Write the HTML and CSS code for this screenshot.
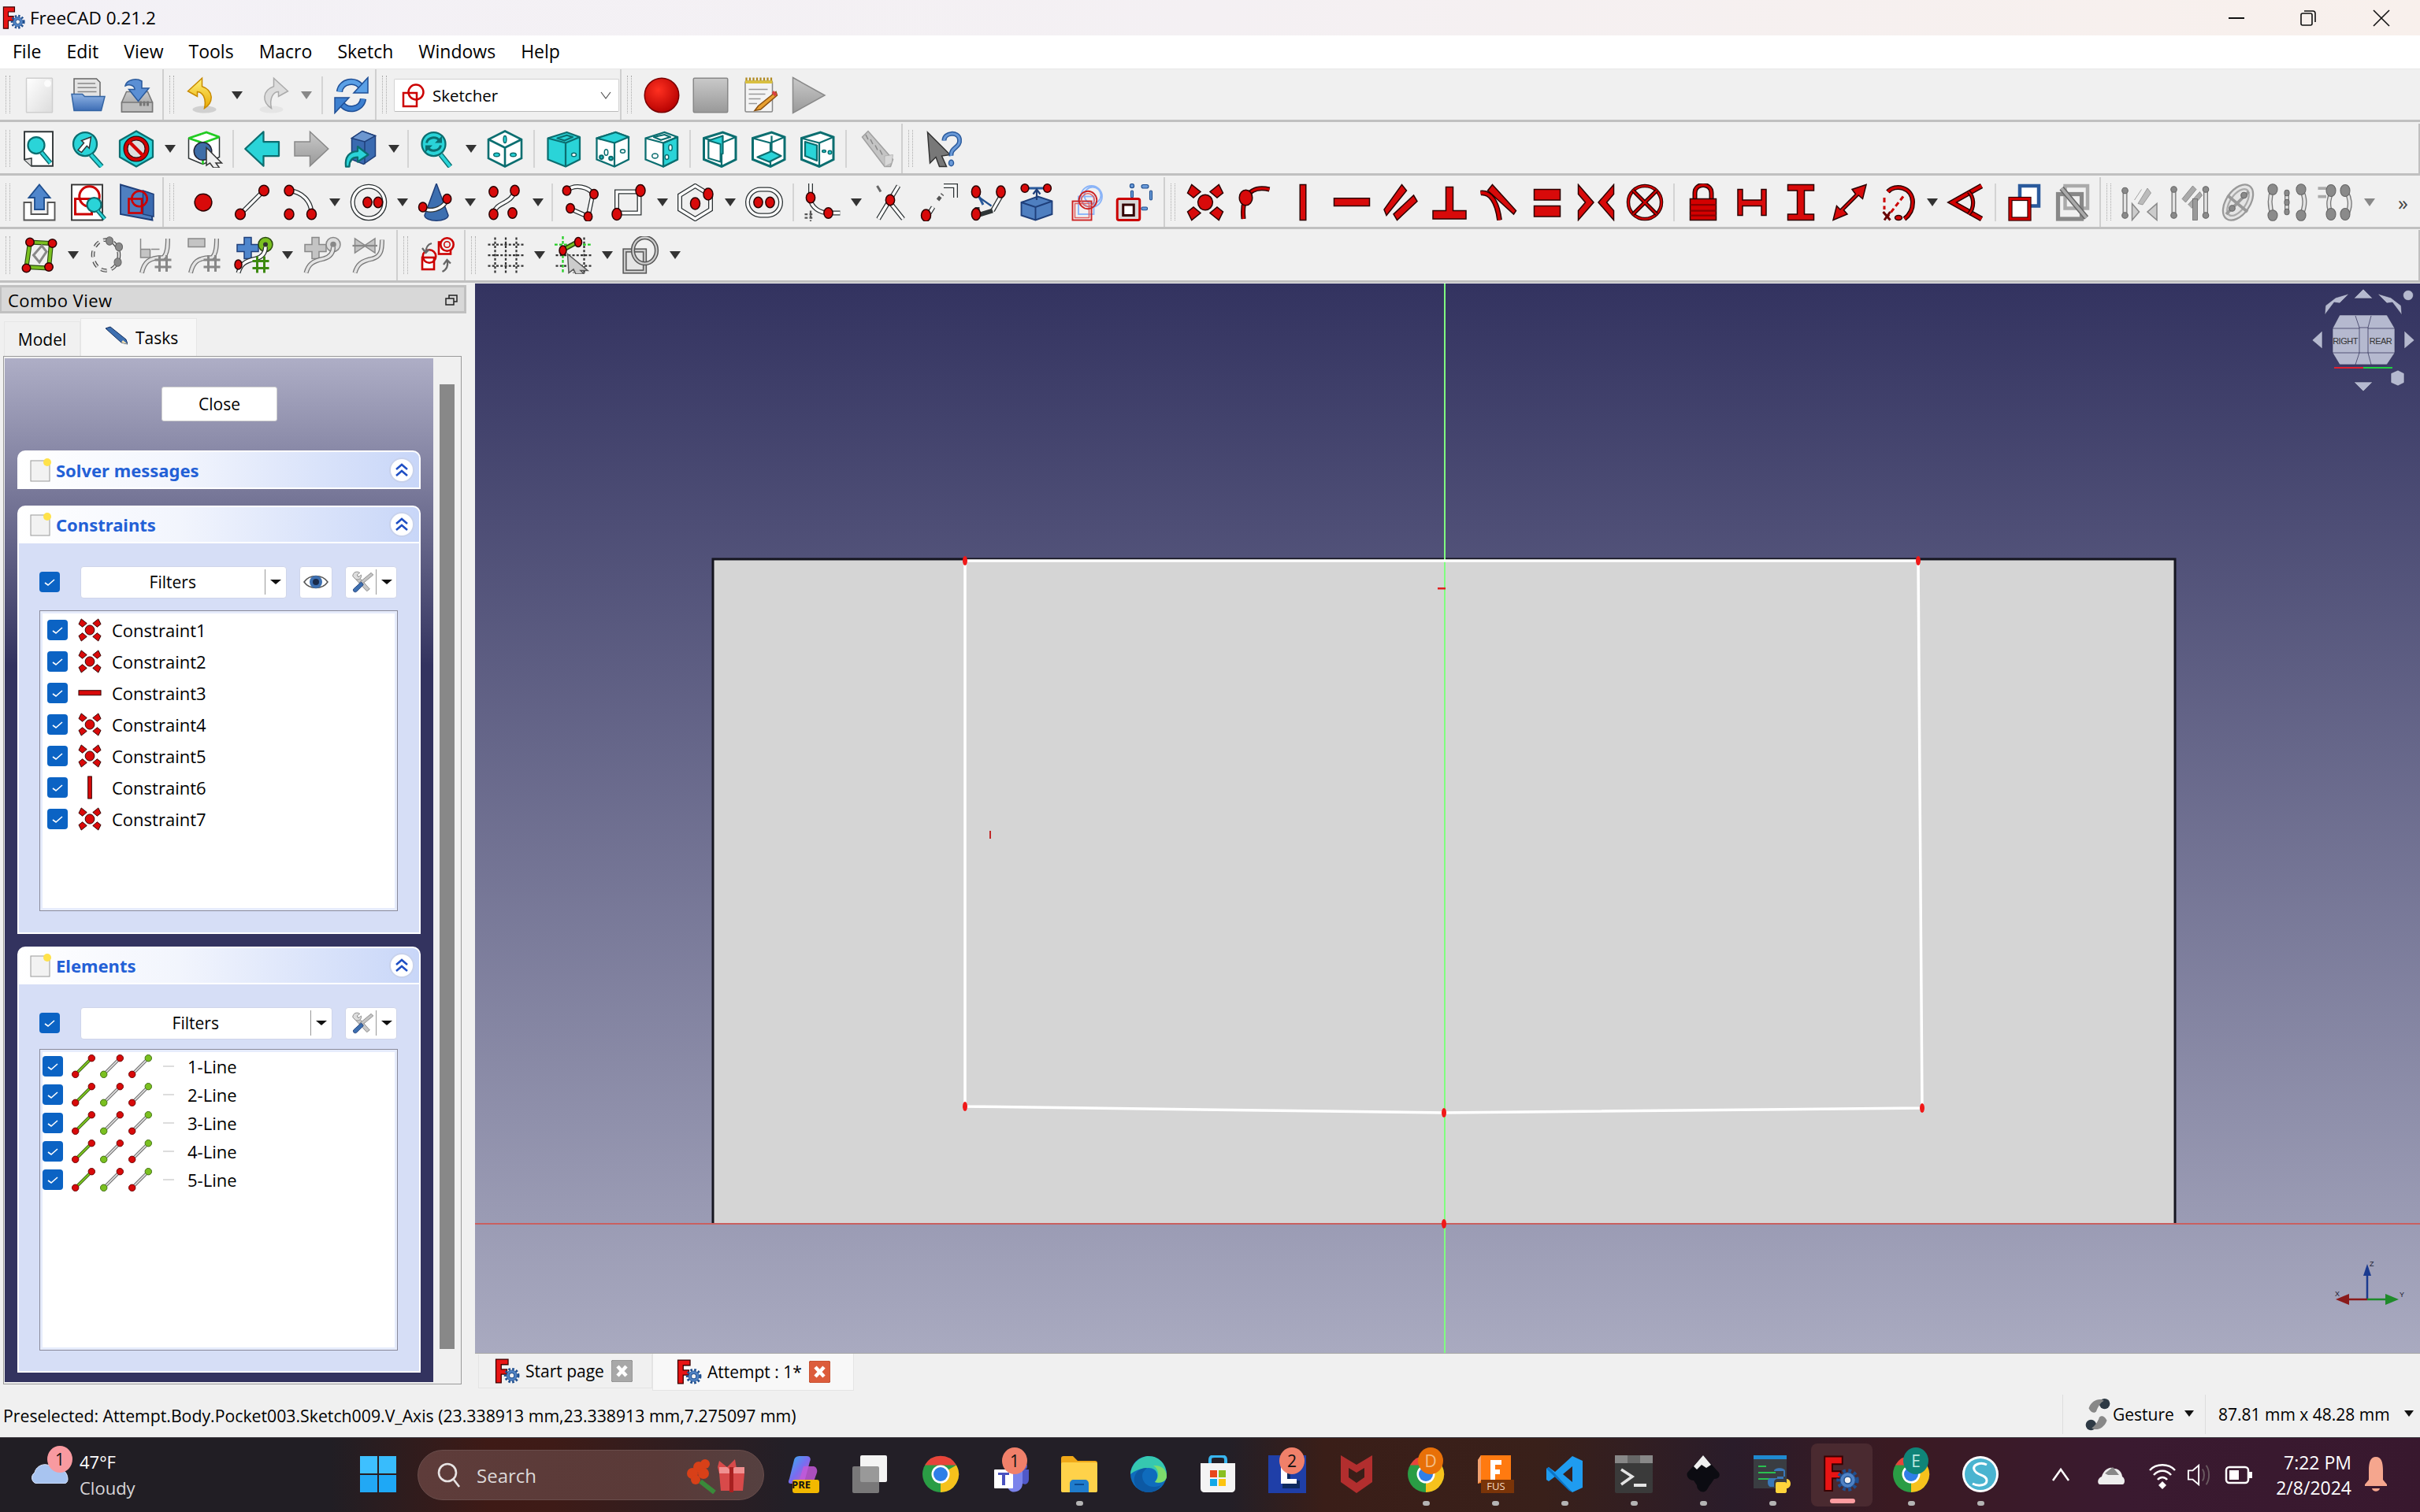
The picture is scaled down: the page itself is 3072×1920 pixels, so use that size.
FILE: index.html
```html
<!DOCTYPE html>
<html lang="en">
<head>
<meta charset="utf-8">
<title>FreeCAD 0.21.2</title>
<link rel="stylesheet" href="styles.css">
</head>
<body>
<svg class="defs" aria-hidden="true">
<defs>
<linearGradient id="gPage" x1="0" y1="0" x2="1" y2="1"><stop offset="0" stop-color="#fff"/><stop offset="1" stop-color="#dcdcdc"/></linearGradient>
<linearGradient id="gBlue" x1="0" y1="0" x2="0" y2="1"><stop offset="0" stop-color="#8fb3e4"/><stop offset="1" stop-color="#3d6db5"/></linearGradient>
<linearGradient id="gGrey" x1="0" y1="0" x2="0" y2="1"><stop offset="0" stop-color="#c9c9c9"/><stop offset="1" stop-color="#999"/></linearGradient>
<linearGradient id="gYel" x1="0" y1="0" x2="0" y2="1"><stop offset="0" stop-color="#fff27a"/><stop offset="1" stop-color="#e8a800"/></linearGradient>
<linearGradient id="gCop" x1="0" y1="0" x2="1" y2="1"><stop offset="0" stop-color="#2fb6f0"/><stop offset=".5" stop-color="#7a6cf0"/><stop offset="1" stop-color="#e05ab0"/></linearGradient>
<radialGradient id="gRec" cx=".4" cy=".35" r=".7"><stop offset="0" stop-color="#ff3020"/><stop offset="1" stop-color="#b40000"/></radialGradient>

<symbol id="fc" viewBox="0 0 64 64"><path d="M3 2H33V15H16V27H30V39H16V60H3Z" fill="#e81414" stroke="#3a0000" stroke-width="2.5"/><circle cx="42" cy="42" r="16" fill="none" stroke="#1f4f8f" stroke-width="6" stroke-dasharray="5 4.5"/><circle cx="42" cy="42" r="13" fill="#4f82c4" stroke="#1f4f8f" stroke-width="1.5"/><circle cx="42" cy="42" r="6" fill="#f2f2f2" stroke="#1f4f8f" stroke-width="2"/></symbol>

<symbol id="new" viewBox="0 0 64 64"><rect x="10" y="3" width="44" height="58" rx="1" fill="url(#gPage)" stroke="#cfcfcf" stroke-width="2"/><circle cx="46" cy="12" r="6" fill="#fff" opacity=".8"/></symbol>
<symbol id="open" viewBox="0 0 64 64"><path d="M8 4H46L52 10V36H8Z" fill="#e4e4e4" stroke="#666" stroke-width="2"/><path d="M14 12H44M14 19H46M14 26H46" stroke="#888" stroke-width="2"/><path d="M4 30H22L26 34H60L54 58H8Z" fill="url(#gBlue)" stroke="#3465a4" stroke-width="2"/></symbol>
<symbol id="save" viewBox="0 0 64 64"><path d="M6 44L14 26H50L58 44V60H6Z" fill="url(#gGrey)" stroke="#777" stroke-width="2"/><rect x="6" y="44" width="52" height="16" fill="#bdbdbd" stroke="#777" stroke-width="2"/><path d="M36 46H40M42 46H46M48 46H52" stroke="#777" stroke-width="8"/><path d="M12 16C14 6 30 2 40 8V20H52L34 42L18 22H28C28 16 20 12 12 16Z" fill="#5b8fd4" stroke="#2a5a9c" stroke-width="2"/></symbol>
<symbol id="undo" viewBox="0 0 64 64"><ellipse cx="34" cy="56" rx="20" ry="6" fill="#bbb" opacity=".6"/><path d="M30 3L6 25L22 34L22 26C30 26 38 36 34 54C50 44 50 24 30 17Z" fill="url(#gYel)" stroke="#c88a00" stroke-width="2"/></symbol>
<symbol id="redo" viewBox="0 0 64 64"><ellipse cx="30" cy="56" rx="20" ry="6" fill="#ddd" opacity=".6"/><path d="M34 3L58 25L42 34L42 26C34 26 26 36 30 54C14 44 14 24 34 17Z" fill="#dcdcdc" stroke="#aaa" stroke-width="2"/></symbol>
<symbol id="refresh" viewBox="0 0 64 64"><g fill="none" stroke-linecap="butt"><path d="M12 26C14 8 40 2 50 20" stroke="#1f4f96" stroke-width="11"/><path d="M12 26C14 8 40 2 50 20" stroke="#5ba0e6" stroke-width="7"/><path d="M52 38C50 56 24 62 14 44" stroke="#1f4f96" stroke-width="11"/><path d="M52 38C50 56 24 62 14 44" stroke="#3d80d0" stroke-width="7"/></g><path d="M60 2V28H36Z" fill="#5ba0e6" stroke="#1f4f96" stroke-width="2"/><path d="M4 62V36H28Z" fill="#3d80d0" stroke="#1f4f96" stroke-width="2"/></symbol>
<symbol id="swb" viewBox="0 0 64 64"><rect x="6" y="26" width="34" height="34" fill="#fff" stroke="#cc0000" stroke-width="5"/><circle cx="38" cy="24" r="19" fill="none" stroke="#cc0000" stroke-width="5"/></symbol>
<symbol id="rec" viewBox="0 0 64 64"><circle cx="32" cy="32" r="29" fill="url(#gRec)" stroke="#7a0000" stroke-width="2"/></symbol>
<symbol id="stop" viewBox="0 0 64 64"><rect x="3" y="3" width="58" height="58" rx="2" fill="url(#gGrey)" stroke="#888" stroke-width="2"/></symbol>
<symbol id="macro" viewBox="0 0 64 64"><rect x="8" y="8" width="46" height="52" rx="2" fill="#f4f4f4" stroke="#888" stroke-width="2"/><path d="M10 2V12M16 2V12M22 2V12M28 2V12M34 2V12M40 2V12M46 2V12M52 2V12" stroke="#b08a20" stroke-width="3"/><rect x="8" y="7" width="46" height="5" fill="#d9c040"/><path d="M14 22H46M14 30H42M14 38H34M14 46H28" stroke="#999" stroke-width="2"/><path d="M60 26L30 50L24 58L34 56L62 32Z" fill="#e8a030" stroke="#8a5010" stroke-width="2"/><path d="M56 24L62 30L58 34L53 28Z" fill="#d94040"/></symbol>
<symbol id="play" viewBox="0 0 64 64"><path d="M6 2L60 32L6 62Z" fill="url(#gGrey)" stroke="#8a8a8a" stroke-width="2"/></symbol>

<symbol id="fitall" viewBox="0 0 64 64"><path d="M8 3H56V61H20L8 50Z" fill="#fff" stroke="#2e3436" stroke-width="2.5"/><path d="M8 50L20 48V61" fill="#ddd" stroke="#2e3436" stroke-width="2"/><circle cx="28" cy="26" r="14" class="tl"/><path d="M37 38L52 56" stroke="#0b6e70" stroke-width="8"/><path d="M37 38L52 56" stroke="#2ad4d8" stroke-width="4"/></symbol>
<symbol id="fitsel" viewBox="0 0 64 64"><circle cx="28" cy="24" r="20" class="tl"/><path d="M38 42L56 62" stroke="#0b6e70" stroke-width="9"/><path d="M38 42L56 62" stroke="#2ad4d8" stroke-width="5"/><path d="M38 12L22 18L26 22L16 34L22 38L31 27L35 31Z" fill="#fff" stroke="#2e3436" stroke-width="2"/></symbol>
<symbol id="dstyle" viewBox="0 0 64 64"><path d="M32 2L60 18V46L32 62L4 46V18Z" class="tl"/><circle cx="32" cy="32" r="18" fill="#ddd" stroke="#2e1010" stroke-width="8"/><circle cx="32" cy="32" r="18" fill="none" stroke="#d40000" stroke-width="5"/><path d="M19 19L45 45" stroke="#d40000" stroke-width="6"/></symbol>
<symbol id="bbox" viewBox="0 0 64 64"><path d="M6 14L36 4L58 12V46L30 58L6 48Z" fill="#fff" stroke="#2e3436" stroke-width="2"/><path d="M6 14L30 22L58 12M30 22V58M6 14L36 4L58 12" fill="none" stroke="#22cc22" stroke-width="3.500"/><circle cx="30" cy="36" r="15" fill="#3f6ea8" stroke="#223" stroke-width="2"/><path d="M36 30L62 56L52 56L58 64H48L42 56L36 60Z" fill="#eee" stroke="#333" stroke-width="2"/></symbol>
<symbol id="back" viewBox="0 0 64 64"><path d="M34 3L3 32L34 61V44H60V20H34Z" class="tl"/></symbol>
<symbol id="fwd" viewBox="0 0 64 64"><path d="M30 3L61 32L30 61V44H4V20H30Z" fill="url(#gGrey)" stroke="#888" stroke-width="2"/></symbol>
<symbol id="stack" viewBox="0 0 64 64"><path d="M18 14L36 2L58 10V44L38 58L18 50Z" fill="#3a6ab0" stroke="#1f3f7a" stroke-width="2"/><path d="M18 14L40 20L58 10L36 2Z" fill="#6d97d0" stroke="#1f3f7a" stroke-width="2"/><path d="M40 20V58" stroke="#1f3f7a" stroke-width="2"/><path d="M8 62C6 46 14 36 28 36V28L46 42L28 54V46C18 46 14 52 14 62Z" class="tl"/></symbol>
<symbol id="sync" viewBox="0 0 64 64"><circle cx="26" cy="24" r="20" class="tl"/><path d="M38 42L54 62" stroke="#0b6e70" stroke-width="9"/><path d="M38 42L54 62" stroke="#2ad4d8" stroke-width="5"/><path d="M14 22C16 12 30 10 36 18M38 26C36 36 22 38 16 30" fill="none" stroke="#0b6e70" stroke-width="4"/><path d="M40 10V22H28ZM12 38V26H24Z" fill="#0b6e70"/></symbol>
<symbol id="iso" viewBox="0 0 64 64"><path d="M32 2L60 16V48L32 62L4 48V16Z" fill="#fff" stroke="#0b6e70" stroke-width="3.5"/><path d="M4 16L32 30L60 16M32 30V62" fill="none" stroke="#0b6e70" stroke-width="3.5"/><ellipse cx="32" cy="16" rx="2.5" ry="6" fill="#2ad4d8" stroke="#0b6e70" stroke-width="2"/><ellipse cx="18" cy="42" rx="5" ry="3" fill="#2ad4d8" stroke="#0b6e70" stroke-width="2"/><ellipse cx="46" cy="42" rx="5" ry="3" fill="#2ad4d8" stroke="#0b6e70" stroke-width="2"/></symbol>
<symbol id="vfront" viewBox="0 0 64 64"><path d="M6 14L38 4L60 12V50L36 62L6 50Z" class="tl"/><path d="M22 14L38 9L48 12L34 18Z" fill="#fff" class="nf"/><path d="M6 14L36 22L60 12M36 22V62" class="nf"/><ellipse cx="50" cy="42" rx="4" ry="3" fill="#fff" stroke="#0b6e70" stroke-width="2"/></symbol>
<symbol id="vtop" viewBox="0 0 64 64"><path d="M6 14L38 4L60 12V50L36 62L6 50Z" fill="#fff" stroke="#0b6e70" stroke-width="3"/><path d="M6 14L38 4L60 12L36 22Z" class="tl"/><path d="M36 22V62" class="nf"/><ellipse cx="22" cy="38" rx="3" ry="5" fill="#fff" stroke="#0b6e70" stroke-width="2"/><ellipse cx="14" cy="46" rx="3" ry="3" class="tl"/><ellipse cx="30" cy="48" rx="3" ry="3" class="tl"/><ellipse cx="50" cy="36" rx="4" ry="3" fill="#fff" stroke="#0b6e70" stroke-width="2"/></symbol>
<symbol id="vright" viewBox="0 0 64 64"><path d="M6 14L38 4L60 12V50L36 62L6 50Z" fill="#fff" stroke="#0b6e70" stroke-width="3"/><path d="M36 22L60 12V50L36 62Z" class="tl"/><path d="M6 14L36 22L60 12" class="nf"/><path d="M20 12L38 8L48 12L32 17Z" fill="#d8f8f8" class="nf"/><ellipse cx="22" cy="44" rx="5" ry="4" fill="#fff" stroke="#0b6e70" stroke-width="2"/><ellipse cx="48" cy="30" rx="3" ry="5" fill="#fff" stroke="#0b6e70" stroke-width="2"/><ellipse cx="42" cy="46" rx="3" ry="4" fill="#fff" stroke="#0b6e70" stroke-width="2"/></symbol>
<symbol id="vrear" viewBox="0 0 64 64"><path d="M6 14L38 4L60 12V50L36 62L6 50Z" fill="#fff" stroke="#0b6e70" stroke-width="4"/><path d="M6 14L36 22L60 12M36 22V62" class="nf"/><path d="M14 18L38 10V40L14 48Z" class="tl"/><path d="M14 18L34 24V54L14 48Z" fill="#fff" stroke="#0b6e70" stroke-width="2.5"/></symbol>
<symbol id="vbot" viewBox="0 0 64 64"><path d="M6 14L38 4L60 12V50L36 62L6 50Z" fill="#fff" stroke="#0b6e70" stroke-width="4"/><path d="M6 14L36 22L60 12M36 22V62" class="nf"/><path d="M14 46L38 36L54 44L34 54Z" class="tl"/><path d="M38 10V36" class="nf"/></symbol>
<symbol id="vleft" viewBox="0 0 64 64"><path d="M6 14L38 4L60 12V50L36 62L6 50Z" fill="#fff" stroke="#0b6e70" stroke-width="4"/><path d="M6 14L36 22L60 12M36 22V62" class="nf"/><path d="M12 20L32 26V52L12 44Z" class="tl"/><ellipse cx="44" cy="36" rx="3" ry="2" fill="#2ad4d8" stroke="#0b6e70" stroke-width="2"/><ellipse cx="54" cy="38" rx="3" ry="3" fill="#2ad4d8" stroke="#0b6e70" stroke-width="2"/></symbol>
<symbol id="ruler" viewBox="0 0 64 64"><path d="M10 12L20 2L62 50L58 62L48 62Z" fill="#c4c4c4" stroke="#a0a0a0" stroke-width="2"/><path d="M48 44V62L60 56L62 42Z" fill="#d8d8d8" stroke="#aaa"/><path d="M16 8L20 16M24 16L28 24M32 26L36 34M40 34L44 42" stroke="#888" stroke-width="2"/></symbol>
<symbol id="whats" viewBox="0 0 64 64"><path d="M6 4L44 42L30 44L38 62L26 62L20 46L10 56Z" fill="#787878" stroke="#333" stroke-width="2"/><path d="M34 18C34 4 58 2 60 16C62 30 44 30 46 44" fill="none" stroke="#2a5a9c" stroke-width="8"/><path d="M34 18C34 4 58 2 60 16C62 30 44 30 46 44" fill="none" stroke="#6a9ad8" stroke-width="4"/><ellipse cx="46" cy="56" rx="4" ry="5" fill="#6a9ad8" stroke="#2a5a9c" stroke-width="2"/></symbol>

<symbol id="leave" viewBox="0 0 64 64"><path d="M6 32H18V52H46V32H58V62H6Z" fill="#fff" stroke="#555" stroke-width="2.5"/><path d="M32 2L50 24H40V44H24V24H14Z" fill="#4f86cc" stroke="#1f4f8f" stroke-width="2.5"/></symbol>
<symbol id="vsketch" viewBox="0 0 64 64"><rect x="4" y="2" width="52" height="60" fill="#fff" stroke="#333" stroke-width="2.5"/><rect x="10" y="26" width="28" height="26" fill="none" stroke="#cc0000" stroke-width="4"/><circle cx="34" cy="22" r="17" fill="none" stroke="#cc0000" stroke-width="4"/><circle cx="42" cy="36" r="12" class="tl"/><path d="M48 46L60 60" stroke="#0b6e70" stroke-width="7"/><path d="M48 46L60 60" stroke="#2ad4d8" stroke-width="3"/></symbol>
<symbol id="mapsk" viewBox="0 0 64 64"><path d="M4 2L52 16L58 62L4 52Z" fill="#4f7fc0" stroke="#1f3f7a" stroke-width="2.5"/><path d="M42 12L60 18V56L42 52Z" fill="#3a6ab0" stroke="#1f3f7a" stroke-width="2"/><rect x="18" y="26" width="22" height="24" fill="none" stroke="#cc0000" stroke-width="3.5"/><circle cx="36" cy="26" r="13" fill="none" stroke="#cc0000" stroke-width="3.5"/></symbol>

<symbol id="spoint" viewBox="0 0 64 64"><circle cx="32" cy="32" r="14.5" class="rd"/></symbol>
<symbol id="sline" viewBox="0 0 64 64"><path d="M12 52L52 12" class="lo"/><path d="M12 52L52 12" class="li"/><ellipse cx="12" cy="52" rx="8.5" ry="9" class="rd"/><ellipse cx="52" cy="12" rx="8.5" ry="9" class="rd"/></symbol>
<symbol id="sarc" viewBox="0 0 64 64"><path d="M12 12C34 14 50 30 50 52" class="lo"/><path d="M12 12C34 14 50 30 50 52" class="li"/><ellipse cx="12" cy="12" rx="8" ry="9" class="rd"/><ellipse cx="12" cy="52" rx="8" ry="9" class="rd"/><ellipse cx="50" cy="52" rx="8" ry="9" class="rd"/></symbol>
<symbol id="scircle" viewBox="0 0 64 64"><circle cx="32" cy="32" r="27" class="lo"/><circle cx="32" cy="32" r="27" class="li"/><ellipse cx="30" cy="32" rx="7.5" ry="9" class="rd"/><ellipse cx="48" cy="32" rx="7.5" ry="9" class="rd"/></symbol>
<symbol id="sconic" viewBox="0 0 64 64"><path d="M32 0L52 54A20 9 0 0 1 12 54Z" fill="#3d6fb0" stroke="#1f3f7a" stroke-width="2"/><path d="M8 40C20 50 42 44 50 28" class="lo"/><path d="M8 40C20 50 42 44 50 28" class="li"/><ellipse cx="9" cy="40" rx="7" ry="8" class="rd"/><ellipse cx="50" cy="26" rx="7" ry="8" class="rd"/></symbol>
<symbol id="sbspl" viewBox="0 0 64 64"><path d="M14 50C20 30 44 36 50 12" class="lo"/><path d="M14 50C20 30 44 36 50 12" class="li"/><ellipse cx="14" cy="14" rx="7.5" ry="9" class="rd"/><ellipse cx="50" cy="12" rx="7.5" ry="9" class="rd"/><ellipse cx="14" cy="52" rx="7.5" ry="9" class="rd"/><ellipse cx="46" cy="50" rx="7.5" ry="9" class="rd"/></symbol>
<symbol id="spoly" viewBox="0 0 64 64"><path d="M10 12C24 0 48 6 54 18L46 56L14 42" class="lo"/><path d="M10 12C24 0 48 6 54 18L46 56L14 42" class="li"/><ellipse cx="10" cy="12" rx="7" ry="8" class="rd"/><ellipse cx="56" cy="18" rx="7" ry="8" class="rd"/><ellipse cx="16" cy="42" rx="7" ry="8" class="rd"/><ellipse cx="46" cy="56" rx="7" ry="8" class="rd"/></symbol>
<symbol id="srect" viewBox="0 0 64 64"><path d="M12 50V14H50V50H12" class="lo"/><path d="M12 50V14H50V50H12" class="li"/><ellipse cx="52" cy="12" rx="8" ry="10" class="rd"/><ellipse cx="12" cy="52" rx="8" ry="10" class="rd"/></symbol>
<symbol id="spolyg" viewBox="0 0 64 64"><path d="M30 4L56 20V44L30 60L4 44V20Z" class="lo"/><path d="M30 4L56 20V44L30 60L4 44V20Z" class="li"/><ellipse cx="30" cy="34" rx="8" ry="10" class="rd"/><ellipse cx="52" cy="18" rx="8" ry="10" class="rd"/></symbol>
<symbol id="sslot" viewBox="0 0 64 64"><rect x="4" y="10" width="56" height="44" rx="22" class="lo"/><rect x="4" y="10" width="56" height="44" rx="22" class="li"/><ellipse cx="22" cy="32" rx="7.5" ry="9" class="rd"/><ellipse cx="42" cy="32" rx="7.5" ry="9" class="rd"/></symbol>
<symbol id="sfillet" viewBox="0 0 64 64"><path d="M12 0V28C14 40 26 50 44 50H62" class="lo"/><path d="M12 0V28C14 40 26 50 44 50H62" class="li"/><path d="M12 46V64M2 52H16M2 58H16" stroke="#555" stroke-width="3" stroke-dasharray="5 3" fill="none"/><ellipse cx="12" cy="24" rx="7.5" ry="9" class="rd"/><ellipse cx="42" cy="50" rx="7.5" ry="9" class="rd"/></symbol>
<symbol id="strim" viewBox="0 0 64 64"><path d="M46 4L12 60" class="lo"/><path d="M46 4L12 60" class="li"/><path d="M30 30L54 60" class="lo"/><path d="M30 30L54 60" class="li"/><path d="M10 4L16 14" stroke="#666" stroke-width="4"/><ellipse cx="32" cy="28" rx="7.5" ry="9" class="rd"/></symbol>
<symbol id="sext" viewBox="0 0 64 64"><path d="M12 56L22 40" class="lo"/><path d="M12 56L22 40" class="li"/><path d="M30 28L38 18" stroke="#555" stroke-width="6" stroke-dasharray="7 4"/><path d="M40 4H60V24" class="lo"/><path d="M40 4H60V24" class="li"/><ellipse cx="10" cy="54" rx="8" ry="10" class="rd"/></symbol>
<symbol id="ssplit" viewBox="0 0 64 64"><path d="M56 18L40 46" class="lo"/><path d="M56 18L40 46" class="li"/><path d="M14 40V54M40 46L14 54" class="lo"/><path d="M14 16L24 36" stroke="#2a5a9c" stroke-width="4"/><path d="M18 24L38 38" stroke="#1f4f8f" stroke-width="3"/><ellipse cx="12" cy="14" rx="7.5" ry="10" class="rd"/><ellipse cx="54" cy="14" rx="7.5" ry="10" class="rd"/><ellipse cx="12" cy="52" rx="7.5" ry="10" class="rd"/></symbol>
<symbol id="sextg" viewBox="0 0 64 64"><path d="M6 32L34 22L58 30V52L30 62L6 54Z" fill="#4f7fc0" stroke="#1f3f7a" stroke-width="2.5"/><path d="M6 32L30 40L58 30M30 40V62" fill="none" stroke="#1f3f7a" stroke-width="2.5"/><path d="M12 8H50" stroke="#2a5a9c" stroke-width="4"/><path d="M32 28V12M26 18L32 10L38 18" stroke="#1f3f7a" stroke-width="3" fill="none"/><ellipse cx="12" cy="8" rx="6.5" ry="7" class="rd"/><ellipse cx="50" cy="8" rx="6.5" ry="7" class="rd"/></symbol>
<symbol id="scarbon" viewBox="0 0 64 64"><g fill="none" stroke="#8ab4f8" stroke-width="2.5"><circle cx="42" cy="22" r="18"/><circle cx="44" cy="20" r="14"/><rect x="20" y="22" width="26" height="30"/></g><rect x="10" y="30" width="32" height="32" fill="none" stroke="#cc2020" stroke-width="2.5"/><rect x="14" y="34" width="24" height="24" fill="none" stroke="#e06060" stroke-width="2"/><circle cx="36" cy="28" r="15" fill="none" stroke="#cc2020" stroke-width="2.5"/><circle cx="36" cy="28" r="11" fill="none" stroke="#e06060" stroke-width="2"/></symbol>
<symbol id="scons" viewBox="0 0 64 64"><g fill="#6a9ad8" stroke="#1f4f8f" stroke-width="1.5"><circle cx="28" cy="4" r="3.5"/><rect x="44" y="2" width="12" height="6" rx="3"/><rect x="58" y="12" width="4" height="16" rx="2"/><rect x="26" y="12" width="4" height="12" rx="2"/><rect x="44" y="40" width="10" height="5" rx="2"/><rect x="26" y="34" width="4" height="8" rx="2"/></g><rect x="3" y="26" width="38" height="36" rx="3" fill="#d8d8d8" stroke="#cc0000" stroke-width="4"/><rect x="13" y="36" width="18" height="18" fill="#fff" stroke="#300" stroke-width="4"/></symbol>

<symbol id="ccoin" viewBox="0 0 64 64"><ellipse cx="32" cy="32" rx="12.500" ry="13" class="rd"/><path d="M2 16L9 2L24 14L12 24ZM62 16L55 2L40 14L52 24ZM2 48L9 62L24 50L12 40ZM62 48L55 62L40 50L52 40Z" class="rd"/></symbol>
<symbol id="cpoint" viewBox="0 0 64 64"><path d="M14 60C12 40 14 20 30 12C40 6 50 8 58 10" fill="none" stroke="#2b0000" stroke-width="8"/><path d="M14 60C12 40 14 20 30 12C40 6 50 8 58 10" fill="none" stroke="#d40000" stroke-width="4"/><ellipse cx="18" cy="24" rx="11" ry="13" class="rd"/></symbol>
<symbol id="cvert" viewBox="0 0 64 64"><rect x="27" y="2" width="10" height="60" class="rd"/></symbol>
<symbol id="choriz" viewBox="0 0 64 64"><rect x="2" y="25" width="60" height="13" class="rd"/></symbol>
<symbol id="cpara" viewBox="0 0 64 64"><path d="M34 2L42 12L8 54L4 44ZM54 20L60 30L26 62L20 52Z" class="rd"/></symbol>
<symbol id="cperp" viewBox="0 0 64 64"><path d="M26 6H38V46H60V60H4V46H26Z" class="rd"/></symbol>
<symbol id="ctang" viewBox="0 0 64 64"><path d="M22 2L62 46L58 52L14 12Z" class="rd"/><path d="M2 16C18 14 30 30 34 62" fill="none" stroke="#2b0000" stroke-width="9"/><path d="M2 16C18 14 30 30 34 62" fill="none" stroke="#d40000" stroke-width="5"/></symbol>
<symbol id="cequal" viewBox="0 0 64 64"><rect x="10" y="10" width="44" height="18" class="rd"/><rect x="10" y="38" width="44" height="18" class="rd"/></symbol>
<symbol id="csym" viewBox="0 0 64 64"><path d="M2 2L28 32L2 62L2 46L14 32L2 18ZM62 2L36 32L62 62L62 46L50 32L62 18Z" class="rd"/></symbol>
<symbol id="cblock" viewBox="0 0 64 64"><circle cx="32" cy="32" r="28" fill="none" stroke="#2b0000" stroke-width="6"/><circle cx="32" cy="32" r="28" fill="none" stroke="#d40000" stroke-width="3"/><path d="M12 12L52 52M52 12L12 52" stroke="#2b0000" stroke-width="7"/><path d="M12 12L52 52M52 12L12 52" stroke="#d40000" stroke-width="3"/></symbol>
<symbol id="clock" viewBox="0 0 64 64"><path d="M18 28V16C18 -2 46 -2 46 16V28" fill="none" stroke="#2b0000" stroke-width="8"/><path d="M18 28V16C18 -2 46 -2 46 16V28" fill="none" stroke="#d40000" stroke-width="4"/><rect x="10" y="26" width="44" height="36" fill="#d40000" stroke="#2b0000" stroke-width="2"/><path d="M10 36H54M10 46H54M10 54H54" stroke="#8a0000" stroke-width="3"/></symbol>
<symbol id="chd" viewBox="0 0 64 64"><path d="M8 10H16V28H48V10H56V54H48V38H16V54H8Z" class="rd"/></symbol>
<symbol id="cvd" viewBox="0 0 64 64"><path d="M10 2H54V12H38V52H54V62H10V52H26V12H10Z" class="rd"/></symbol>
<symbol id="cdist" viewBox="0 0 64 64"><path d="M60 2L54 26L47 20L22 45L28 52L4 62L10 38L16 44L42 18L36 10Z" class="rd"/></symbol>
<symbol id="crad" viewBox="0 0 64 64"><path d="M14 14C26 0 56 6 56 32C56 44 50 54 42 60" fill="none" stroke="#2b0000" stroke-width="8"/><path d="M14 14C26 0 56 6 56 32C56 44 50 54 42 60" fill="none" stroke="#d40000" stroke-width="4"/><path d="M8 24V32M8 38V44M40 22L12 58" stroke="#cc0000" stroke-width="4" stroke-dasharray="8 5"/><path d="M6 48L18 62M18 48L8 62" stroke="#600" stroke-width="4"/><ellipse cx="32" cy="58" rx="6" ry="4" class="rd"/></symbol>
<symbol id="cang" viewBox="0 0 64 64"><path d="M58 4L8 32L58 60" fill="none" stroke="#2b0000" stroke-width="9"/><path d="M58 4L8 32L58 60" fill="none" stroke="#d40000" stroke-width="5"/><path d="M36 14C46 24 46 42 36 52" fill="none" stroke="#2b0000" stroke-width="7"/><path d="M36 14C46 24 46 42 36 52" fill="none" stroke="#d40000" stroke-width="3"/></symbol>
<symbol id="ctog" viewBox="0 0 64 64"><rect x="24" y="4" width="32" height="34" fill="#fff" stroke="#2a5a9c" stroke-width="6"/><rect x="8" y="26" width="32" height="34" fill="#fff" stroke="#300" stroke-width="7"/><rect x="8" y="26" width="32" height="34" fill="none" stroke="#d40000" stroke-width="4"/></symbol>
<symbol id="cdriv" viewBox="0 0 64 64"><rect x="18" y="4" width="38" height="38" fill="none" stroke="#aaa" stroke-width="6"/><rect x="6" y="18" width="40" height="42" fill="none" stroke="#888" stroke-width="7"/><path d="M12 8L54 58" stroke="#666" stroke-width="9"/><path d="M12 8L54 58" stroke="#aaa" stroke-width="5"/></symbol>

<symbol id="b1" viewBox="0 0 64 64"><g class="gr"><path d="M6 14V50" class="glo"/><path d="M6 14V50" class="gli"/></g><circle cx="6" cy="12" r="5" class="gd"/><circle cx="6" cy="54" r="5" class="gd"/><path d="M28 34L44 8L50 16L36 36ZM22 28L34 10" fill="#bbb" stroke="#888"/><path d="M18 34V62L30 48ZM60 34V62L44 48Z" fill="#ccc" stroke="#888" stroke-width="2"/></symbol>
<symbol id="b2" viewBox="0 0 64 64"><path d="M6 10V54" class="glo"/><path d="M6 10V54" class="gli"/><path d="M60 10V54" class="glo"/><path d="M60 10V54" class="gli"/><circle cx="6" cy="10" r="5" class="gd"/><circle cx="6" cy="54" r="5" class="gd"/><circle cx="60" cy="10" r="5" class="gd"/><circle cx="60" cy="54" r="5" class="gd"/><path d="M20 26L38 4L44 10L26 32ZM30 36L50 14L54 20L36 42" fill="#aaa" stroke="#777"/><rect x="38" y="26" width="8" height="36" fill="#999" stroke="#666"/></symbol>
<symbol id="b3" viewBox="0 0 64 64"><ellipse cx="32" cy="32" rx="20" ry="34" transform="rotate(35 32 32)" fill="#e4e4e4" stroke="#999" stroke-width="3"/><ellipse cx="32" cy="32" rx="13" ry="26" transform="rotate(35 32 32)" fill="none" stroke="#aaa" stroke-width="3"/><path d="M12 52L50 14M14 20L48 48" stroke="#999" stroke-width="5"/><circle cx="22" cy="42" r="5" class="gd"/><circle cx="42" cy="20" r="5" class="gd"/></symbol>
<symbol id="b4" viewBox="0 0 64 64"><path d="M8 10C2 24 2 38 8 54" class="glo"/><path d="M8 10C2 24 2 38 8 54" class="gli"/><path d="M56 10C64 24 64 38 56 54" class="glo"/><path d="M56 10C64 24 64 38 56 54" class="gli"/><ellipse cx="8" cy="10" rx="8" ry="9" class="gd"/><ellipse cx="8" cy="54" rx="8" ry="9" class="gd"/><ellipse cx="56" cy="10" rx="8" ry="9" class="gd"/><ellipse cx="56" cy="54" rx="8" ry="9" class="gd"/><path d="M32 14V50" class="glo"/><path d="M32 14V50" class="gli"/><ellipse cx="32" cy="16" rx="4" ry="5" class="gd"/><ellipse cx="32" cy="32" rx="4" ry="5" class="gd"/><ellipse cx="32" cy="48" rx="4" ry="5" class="gd"/></symbol>
<symbol id="b5" viewBox="0 0 64 64"><path d="M2 8H16M2 22H16" stroke="#aaa" stroke-width="5"/><path d="M26 14C18 28 18 40 26 54" class="glo"/><path d="M26 14C18 28 18 40 26 54" class="gli"/><path d="M50 14C58 28 58 40 50 54" class="glo"/><path d="M50 14C58 28 58 40 50 54" class="gli"/><ellipse cx="24" cy="12" rx="8" ry="10" class="gd"/><ellipse cx="24" cy="52" rx="8" ry="10" class="gd"/><ellipse cx="48" cy="12" rx="8" ry="10" class="gd"/><ellipse cx="48" cy="52" rx="8" ry="10" class="gd"/></symbol>

<symbol id="sclose" viewBox="0 0 64 64"><path d="M16 10L52 12L48 54L10 52Z" fill="none" stroke="#2b4a10" stroke-width="8"/><path d="M16 10L52 12L48 54L10 52Z" fill="none" stroke="#7ac020" stroke-width="5"/><path d="M22 32L36 16L44 26L32 44Z" fill="none" stroke="#888" stroke-width="4"/><circle cx="16" cy="10" r="7" class="rd"/><circle cx="54" cy="12" r="7" class="rd"/><circle cx="10" cy="54" r="7" class="rd"/><circle cx="48" cy="52" r="7" class="rd"/></symbol>
<symbol id="sclone" viewBox="0 0 64 64"><g fill="none" stroke="#444" stroke-width="6" stroke-dasharray="10 8"><ellipse cx="30" cy="32" rx="22" ry="26"/></g><g fill="none" stroke="#ddd" stroke-width="3" stroke-dasharray="10 8"><ellipse cx="30" cy="32" rx="22" ry="26"/></g><ellipse cx="36" cy="8" rx="6" ry="7" class="gd"/><ellipse cx="52" cy="18" rx="6" ry="7" class="gd"/><ellipse cx="50" cy="44" rx="6" ry="7" class="gd"/></symbol>
<symbol id="sdis1" viewBox="0 0 64 64"><path d="M6 4V22H22V36H6V22M24 22H38" fill="#c4c4c4" stroke="#888" stroke-width="2"/><path d="M8 62C12 44 20 36 44 36C52 30 52 14 52 4" class="glo"/><path d="M8 62C12 44 20 36 44 36C52 30 52 14 52 4" class="gli"/><path d="M38 32V60M50 32V60M30 40H58M30 52H58" stroke="#888" stroke-width="4"/></symbol>
<symbol id="sdis2" viewBox="0 0 64 64"><rect x="4" y="4" width="28" height="14" fill="#c4c4c4" stroke="#888" stroke-width="2"/><path d="M8 62C12 44 20 36 44 36C52 30 52 14 52 4" class="glo"/><path d="M8 62C12 44 20 36 44 36C52 30 52 14 52 4" class="gli"/><path d="M38 32V60M50 32V60M30 40H58M30 52H58" stroke="#888" stroke-width="4"/></symbol>
<symbol id="sadd" viewBox="0 0 64 64"><path d="M16 2H28V14H40V26H28V38H16V26H4V14H16Z" fill="#4f86cc" stroke="#1f3f7a" stroke-width="2"/><circle cx="52" cy="14" r="12" fill="#7ac020" stroke="#2b4a10" stroke-width="2"/><circle cx="52" cy="14" r="4" fill="#333"/><path d="M6 62C10 48 16 42 36 38C50 34 52 24 52 18" class="lo"/><path d="M6 62C10 48 16 42 36 38C50 34 52 24 52 18" class="li"/><path d="M38 34V62M50 34V62M30 42H58M30 54H58" stroke="#3d8a10" stroke-width="4"/><ellipse cx="6" cy="48" rx="6" ry="8" class="rd"/></symbol>
<symbol id="sdis3" viewBox="0 0 64 64"><path d="M16 2H28V14H40V26H28V38H16V26H4V14H16Z" fill="#c4c4c4" stroke="#888" stroke-width="2"/><circle cx="52" cy="14" r="12" fill="#ddd" stroke="#888" stroke-width="2"/><circle cx="52" cy="14" r="5" fill="#888"/><path d="M6 62C10 48 16 42 36 38C50 34 52 24 52 18" class="glo"/><path d="M6 62C10 48 16 42 36 38C50 34 52 24 52 18" class="gli"/></symbol>
<symbol id="sdis4" viewBox="0 0 64 64"><path d="M6 4V28L24 16ZM40 4V28L22 16Z" fill="#c4c4c4" stroke="#888" stroke-width="2"/><path d="M2 16H44" stroke="#888" stroke-width="3"/><path d="M6 62C10 48 16 42 36 38C50 34 52 24 52 6" class="glo"/><path d="M6 62C10 48 16 42 36 38C50 34 52 24 52 6" class="gli"/></symbol>
<symbol id="sswap" viewBox="0 0 64 64"><rect x="36" y="10" width="20" height="20" fill="#fff" stroke="#cc0000" stroke-width="3.5"/><circle cx="50" cy="14" r="11" fill="#eee" stroke="#cc0000" stroke-width="3.5"/><circle cx="50" cy="14" r="5" fill="none" stroke="#cc0000" stroke-width="2"/><rect x="8" y="36" width="20" height="20" fill="#fff" stroke="#cc0000" stroke-width="3.5"/><circle cx="20" cy="34" r="11" fill="none" stroke="#cc0000" stroke-width="3.5"/><path d="M24 12C16 14 14 22 14 28M8 20L14 28L20 22M42 60C50 56 52 48 50 40M44 48L50 40L56 46" fill="none" stroke="#666" stroke-width="3"/></symbol>
<symbol id="sgrid" viewBox="0 0 64 64"><g stroke="#333" stroke-width="3" stroke-dasharray="4 3"><path d="M14 2V62M32 2V62M50 2V62M2 14H62M2 32H62M2 50H62"/></g></symbol>
<symbol id="ssnap" viewBox="0 0 64 64"><g stroke="#333" stroke-width="3" stroke-dasharray="4 3"><path d="M50 2V62M32 40V62M2 32H62M2 50H62"/></g><g stroke="#22cc22" stroke-width="3" stroke-dasharray="5 3"><path d="M14 0V62M0 14H62"/></g><path d="M16 22L38 10" stroke="#2b4a10" stroke-width="8"/><path d="M16 22L38 10" stroke="#7ac020" stroke-width="4"/><ellipse cx="14" cy="24" rx="6" ry="8" class="rd"/><ellipse cx="40" cy="10" rx="6" ry="8" class="rd"/><path d="M22 30L56 58L44 58L50 64L36 64L32 56L24 62Z" fill="#ccc" stroke="#555" stroke-width="2"/></symbol>
<symbol id="slayer" viewBox="0 0 64 64"><rect x="4" y="24" width="34" height="36" fill="#e4e4e4" stroke="#555" stroke-width="7"/><rect x="4" y="24" width="34" height="36" fill="none" stroke="#ccc" stroke-width="3"/><ellipse cx="38" cy="24" rx="20" ry="22" fill="none" stroke="#555" stroke-width="7"/><ellipse cx="38" cy="24" rx="20" ry="22" fill="none" stroke="#ccc" stroke-width="3"/></symbol>

<symbol id="chk" viewBox="0 0 26 26"><rect x="0" y="0" width="26" height="26" rx="4" fill="#0b63c4"/><path d="M7 14L11 17L19 10" fill="none" stroke="#fff" stroke-width="1.600"/></symbol>
<symbol id="ldoc" viewBox="0 0 28 32"><rect x="1" y="4" width="24" height="26" fill="#f2f2f2" stroke="#999"/><circle cx="22" cy="6" r="5" fill="#ffe24a"/></symbol>
<symbol id="chev" viewBox="0 0 32 32"><circle cx="16" cy="16" r="15" fill="#fff" stroke="#c8d2ec" stroke-width="2"/><path d="M9 15L16 9L23 15M9 23L16 17L23 23" fill="none" stroke="#1f4fc4" stroke-width="2.500"/></symbol>
<symbol id="eye" viewBox="0 0 32 24"><path d="M1 12C8 2 24 2 31 12C24 22 8 22 1 12Z" fill="#fff" stroke="#555" stroke-width="1.500"/><circle cx="16" cy="12" r="8" fill="#3d6fb0"/><circle cx="16" cy="12" r="4" fill="#1a2a4a"/></symbol>
<symbol id="tools" viewBox="0 0 32 32"><path d="M8 6L26 26L22 29L4 10Z" fill="#c8c8c8" stroke="#888"/><path d="M2 8C2 2 8 0 12 3L8 6L10 9L14 6C15 11 10 14 6 12Z" fill="#ddd" stroke="#888"/><path d="M28 3L31 6L14 20L11 17Z" fill="#c4c4c4" stroke="#888"/><path d="M14 16L17 20L7 30C4 31 2 29 3 26Z" fill="#3d6fb0" stroke="#1f3f7a"/></symbol>
<symbol id="ered" viewBox="0 0 32 32"><path d="M6 26L26 6" stroke="#2b4a10" stroke-width="4"/><path d="M6 26L26 6" stroke="#7ac020" stroke-width="2.500"/><circle cx="5" cy="27" r="4.500" class="rd1"/><circle cx="27" cy="5" r="4.500" class="rd1"/></symbol>
<symbol id="egs" viewBox="0 0 32 32"><path d="M6 26L26 6" stroke="#666" stroke-width="4"/><path d="M6 26L26 6" stroke="#ddd" stroke-width="2"/><circle cx="5" cy="27" r="4.500" class="gn1"/><circle cx="27" cy="5" r="4.500" class="rd1"/></symbol>
<symbol id="egs2" viewBox="0 0 32 32"><path d="M6 26L26 6" stroke="#666" stroke-width="4"/><path d="M6 26L26 6" stroke="#ddd" stroke-width="2"/><circle cx="5" cy="27" r="4.500" class="rd1"/><circle cx="27" cy="5" r="4.500" class="gn1"/></symbol>
<symbol id="gest" viewBox="0 0 32 48"><circle cx="25" cy="10" r="7" fill="#2e3a45"/><circle cx="7" cy="38" r="7" fill="#2e3a45"/><path d="M4 16C8 4 20 2 24 6C20 8 16 14 14 20C10 24 6 20 4 16ZM28 32C24 44 12 46 8 42C12 40 16 34 18 28C22 24 26 28 28 32Z" fill="#888"/></symbol>
<symbol id="xgr" viewBox="0 0 27 28"><rect x="0" y="0" width="27" height="28" rx="3" fill="#a8a8a8" stroke="#8a8a8a"/><path d="M8 8L19 20M19 8L8 20" stroke="#fff" stroke-width="4.500"/></symbol>
<symbol id="xor" viewBox="0 0 27 28"><rect x="0" y="0" width="27" height="28" rx="3" fill="#dc5c3c" stroke="#b84a2a"/><path d="M8 8L19 20M19 8L8 20" stroke="#fff" stroke-width="4.500"/></symbol>

<symbol id="win" viewBox="0 0 48 48"><rect x="1" y="1" width="22" height="22" fill="#3ec0ff"/><rect x="25" y="1" width="22" height="22" fill="#38bcfc"/><rect x="1" y="25" width="22" height="22" fill="#22a8f4"/><rect x="25" y="25" width="22" height="22" fill="#1ea8f6"/></symbol>
<symbol id="gift" viewBox="0 0 80 48"><g fill="#d84018"><circle cx="16" cy="14" r="7"/><circle cx="8" cy="22" r="7"/><circle cx="22" cy="22" r="7"/><circle cx="12" cy="30" r="6"/><circle cx="24" cy="10" r="6"/></g><path d="M18 32L36 46" stroke="#3a8a3a" stroke-width="6"/><path d="M42 6L52 14L62 4L64 16L74 14V22L72 44H44L42 22L40 14Z" fill="#d84a4a"/><path d="M42 14L52 14L56 18L62 14H74V22H42Z" fill="#f09090"/><rect x="55" y="14" width="5" height="32" fill="#a82020"/></symbol>
<symbol id="copilot" viewBox="0 0 48 48"><path d="M8 30L14 6C15 2 18 1 22 1H30C34 1 36 4 34 8L28 30C27 34 24 36 20 36H10C7 36 6 34 8 30Z" fill="url(#gCop)"/><path d="M26 14H38C42 14 44 18 43 22L38 36C37 38 35 40 32 40H18Z" fill="#c258d8" opacity=".85"/><rect x="12" y="31" width="34" height="17" rx="3" fill="#f2b800"/></symbol>
<symbol id="tview" viewBox="0 0 48 48"><rect x="10" y="0" width="34" height="34" rx="2" fill="#f4f4f4"/><rect x="0" y="14" width="34" height="34" rx="2" fill="#888" opacity=".85"/></symbol>
<symbol id="chrome" viewBox="0 0 48 48"><circle cx="24" cy="24" r="23" fill="#2a9d45"/><path d="M4 12.500A23 23 0 0 1 44 12.500H24Z" fill="#e8443a"/><path d="M44 12.500A23 23 0 0 1 24 47L24 24Z" fill="#f6c21c"/><circle cx="24" cy="24" r="11.500" fill="#fff"/><circle cx="24" cy="24" r="9" fill="#2f7fe8"/></symbol>
<symbol id="teams" viewBox="0 0 48 48"><circle cx="32" cy="10" r="6" fill="#7b83eb"/><circle cx="42" cy="14" r="4" fill="#5059c9"/><path d="M20 18H40V36C40 44 32 48 26 46C22 44 20 40 20 36Z" fill="#7b83eb"/><path d="M40 18H48V30C48 36 44 38 40 36Z" fill="#5059c9"/><rect x="4" y="18" width="24" height="24" rx="1" fill="#fff"/><path d="M9 22H23V25H18V38H14V25H9Z" fill="#4a52c0"/></symbol>
<symbol id="folder" viewBox="0 0 48 48"><path d="M1 4C1 2 2 1 4 1H16L22 7H44C46 7 47 8 47 10V44C47 46 46 47 44 47H4C2 47 1 46 1 44Z" fill="#f0a818"/><rect x="1" y="9" width="46" height="38" rx="2" fill="#ffd24a"/><path d="M12 47V36C12 33 14 31 17 31H31C34 31 36 33 36 36V47Z" fill="#1f7ccc"/><rect x="18" y="36" width="12" height="2" fill="#0a4a90"/></symbol>
<symbol id="edge" viewBox="0 0 48 48"><circle cx="24" cy="24" r="23" fill="#0f6cbd"/><path d="M1 24C2 10 14 1 24 1C38 1 47 12 47 26C47 34 38 36 32 34C38 28 36 16 24 16C14 16 6 20 1 24Z" fill="#36c8b0"/><path d="M47 26C47 34 38 36 32 34C38 28 38 18 30 13C40 12 47 18 47 26Z" fill="#7ddc6c"/><path d="M16 26C16 36 26 44 40 38C36 44 30 47 24 47C12 47 4 38 6 28C8 20 14 16 22 16C18 20 16 22 16 26Z" fill="#0c59a4"/></symbol>
<symbol id="store" viewBox="0 0 48 48"><path d="M14 14V6C14 2 16 1 20 1H28C32 1 34 2 34 6V14" fill="none" stroke="#38b6f0" stroke-width="4"/><path d="M2 10H46V42C46 45 44 47 41 47H7C4 47 2 45 2 42Z" fill="#f4f4f4"/><rect x="14" y="19" width="9" height="9" fill="#e8481c"/><rect x="25" y="19" width="9" height="9" fill="#8ac020"/><rect x="14" y="30" width="9" height="9" fill="#12a8e8"/><rect x="25" y="30" width="9" height="9" fill="#fcc410"/></symbol>
<symbol id="letter" viewBox="0 0 48 48"><rect x="0" y="0" width="48" height="48" fill="#1f3fa8"/><path d="M18 10H28V32H40V42H18Z" fill="#0e2a60"/><path d="M16 8H24V30H36V36H16Z" fill="#fff"/></symbol>
<symbol id="mcafee" viewBox="0 0 48 48"><path d="M4 0L24 12L44 0V34L24 48L4 34ZM14 16V28L24 35L34 28V16L24 22Z" fill="#b22e2e" fill-rule="evenodd"/></symbol>
<symbol id="fusion" viewBox="0 0 48 48"><path d="M2 6L6 0H44V34H10L2 36Z" fill="#ff7a10"/><path d="M2 6L6 0V32L2 36Z" fill="#f0a070"/><path d="M18 6H32V12H24V18H30V24H24V32H18Z" fill="#fff"/><rect x="6" y="31" width="42" height="17" fill="#7a3408"/></symbol>
<symbol id="vscode" viewBox="0 0 48 48"><path d="M34 1L47 7V41L34 47L12 27L4 33L1 31V17L4 15L12 21ZM34 14L22 24L34 34Z" fill="#1f9cf0" fill-rule="evenodd"/><path d="M1 17L4 15L34 47L30 45Z" fill="#0a74c8"/></symbol>
<symbol id="term" viewBox="0 0 48 48"><rect x="0" y="0" width="48" height="48" rx="2" fill="#3a3a3a"/><rect x="0" y="0" width="16" height="10" fill="#888"/><rect x="16" y="0" width="16" height="10" fill="#666"/><rect x="32" y="0" width="16" height="10" fill="#888"/><path d="M8 18L22 27L8 37" fill="none" stroke="#e4e4e4" stroke-width="3.500"/><rect x="24" y="36" width="16" height="4" fill="#e4e4e4"/></symbol>
<symbol id="inks" viewBox="0 0 48 48"><path d="M24 0L44 22C46 26 44 30 38 30L34 36C30 40 30 44 26 46C22 48 16 44 16 38L12 32C6 32 2 26 4 22Z" fill="#0c0c12"/><path d="M24 0L34 12L28 16L22 12L16 18L12 14Z" fill="#f0f0f0"/></symbol>
<symbol id="pyth" viewBox="0 0 48 48"><rect x="0" y="0" width="42" height="42" fill="#3a3d42"/><rect x="0" y="0" width="42" height="5" fill="#1f8ad0"/><path d="M6 14H16M6 22H28M6 30H22" stroke="#2ac050" stroke-width="2"/><path d="M26 20C26 15 40 15 40 20V27H30V29H22C19 29 18 31 18 34C18 38 20 40 22 40H26V34C26 32 28 30 30 30H38V20Z" fill="#3a78b8"/><path d="M42 30C44 30 47 32 47 36C47 40 44 42 42 42V36C42 34 40 34 38 34H30C28 34 28 36 28 38V46C28 50 42 50 42 46Z" fill="#ffd43b"/></symbol>
<symbol id="silh" viewBox="0 0 48 48"><circle cx="24" cy="24" r="23" fill="#fff"/><circle cx="24" cy="24" r="20" fill="#4ab4d0"/><path d="M32 12C24 8 14 12 16 18C18 26 32 24 32 32C32 38 22 40 14 36" fill="none" stroke="#fff" stroke-width="3"/></symbol>
<symbol id="caret" viewBox="0 0 24 24"><path d="M2 19L12 5L22 19" fill="none" stroke="#fff" stroke-width="2.500"/></symbol>
<symbol id="odrive" viewBox="0 0 36 36"><path d="M4 30C0 30 0 22 6 20C8 12 16 6 22 10C30 10 32 18 32 20C36 22 36 30 32 30Z" fill="#eee"/><path d="M10 16L20 8L28 18H14Z" fill="#888"/></symbol>
<symbol id="wifi" viewBox="0 0 36 36"><g fill="none" stroke="#fff" stroke-width="2.500"><path d="M2 12C10 3 26 3 34 12"/><path d="M7 18C13 11 23 11 29 18"/><path d="M12 24C15 20 21 20 24 24"/></g><path d="M18 26L23 31L18 36L13 31Z" fill="#fff"/></symbol>
<symbol id="vol" viewBox="0 0 36 36"><path d="M2 12H8L16 5V31L8 24H2Z" fill="none" stroke="#fff" stroke-width="2"/><path d="M21 10C24 14 24 22 21 26M26 5C31 12 31 24 26 31" fill="none" stroke="#6a5a60" stroke-width="2"/></symbol>
<symbol id="batt" viewBox="0 0 36 36"><rect x="2" y="8" width="28" height="20" rx="4" fill="none" stroke="#fff" stroke-width="2.500"/><rect x="6" y="12" width="12" height="12" fill="#fff"/><rect x="31" y="14" width="4" height="8" fill="#fff"/></symbol>
<symbol id="bell" viewBox="0 0 30 48"><path d="M15 1C8 1 6 8 6 18V30L1 36V38H29V36L24 30V18C24 8 22 1 15 1Z" fill="#f5a68e"/><path d="M10 41C11 46 19 46 20 41Z" fill="#f5a68e"/></symbol>
<symbol id="wcloud" viewBox="0 0 50 30"><path d="M10 30C2 30 0 20 6 16C8 6 22 2 28 10C38 8 48 14 48 24C48 28 46 30 42 30Z" fill="#a8c4f0" stroke="#e0ebff" stroke-width="1"/></symbol>
</defs>
</svg>

<div class="app">
  <header class="titlebar">
    <svg class="t-ic"><use href="#fc"/></svg>
    <span class="t-text">FreeCAD 0.21.2</span>
    <div class="wctl">
      <svg class="wbtn" viewBox="0 0 22 22"><path d="M1 11H21" stroke="#111" stroke-width="2"/></svg>
      <svg class="wbtn" viewBox="0 0 22 22"><rect x="2" y="5" width="14" height="15" rx="2" fill="none" stroke="#111" stroke-width="1.600"/><path d="M6 2H17C19 2 20 3 20 5V16" fill="none" stroke="#111" stroke-width="1.600"/></svg>
      <svg class="wbtn" viewBox="0 0 22 22"><path d="M1 1L21 21M21 1L1 21" stroke="#111" stroke-width="1.600"/></svg>
    </div>
  </header>
  <nav class="menubar">
    <span>File</span><span>Edit</span><span>View</span><span>Tools</span><span>Macro</span><span>Sketch</span><span>Windows</span><span>Help</span>
  </nav>

  <div class="row r1">
    <div class="tb pl19 w208">
      <svg class="i"><use href="#new"/></svg><svg class="i"><use href="#open"/></svg><svg class="i"><use href="#save"/></svg>
    </div>
    <div class="tb pl19 w270">
      <svg class="i"><use href="#undo"/></svg><i class="dd dw"></i><svg class="i"><use href="#redo"/></svg><i class="dd dw dis"></i><i class="sp"></i><svg class="i"><use href="#refresh"/></svg>
    </div>
    <div class="tb pl22 w311">
      <div class="wbcombo"><svg class="wb-ic"><use href="#swb"/></svg><span>Sketcher</span><svg class="wb-ar" viewBox="0 0 14 14"><path d="M1 3L7 11L13 3" fill="none" stroke="#555" stroke-width="1.200"/></svg></div>
    </div>
    <div class="tb pl20 noend">
      <svg class="i"><use href="#rec"/></svg><svg class="i"><use href="#stop"/></svg><svg class="i"><use href="#macro"/></svg><svg class="i"><use href="#play"/></svg>
    </div>
  </div>

  <div class="row r2">
    <div class="tb pl18 w1146">
      <svg class="i"><use href="#fitall"/></svg><svg class="i"><use href="#fitsel"/></svg><svg class="i"><use href="#dstyle"/></svg><i class="dd"></i><svg class="i"><use href="#bbox"/></svg><i class="sp"></i><svg class="i"><use href="#back"/></svg><svg class="i"><use href="#fwd"/></svg><svg class="i"><use href="#stack"/></svg><i class="dd"></i><i class="sp"></i><svg class="i"><use href="#sync"/></svg><i class="dd"></i><svg class="i"><use href="#iso"/></svg><i class="sp"></i><svg class="i"><use href="#vfront"/></svg><svg class="i"><use href="#vtop"/></svg><svg class="i"><use href="#vright"/></svg><i class="sp"></i><svg class="i"><use href="#vrear"/></svg><svg class="i"><use href="#vbot"/></svg><svg class="i"><use href="#vleft"/></svg><i class="sp"></i><svg class="i"><use href="#ruler"/></svg>
    </div>
    <div class="tb pl20 noend">
      <svg class="i"><use href="#whats"/></svg>
    </div>
  </div>

  <div class="row r3">
    <div class="tb pl19 w208">
      <svg class="i"><use href="#leave"/></svg><svg class="i"><use href="#vsketch"/></svg><svg class="i"><use href="#mapsk"/></svg>
    </div>
    <div class="tb pl19 w1271">
      <svg class="i"><use href="#spoint"/></svg><svg class="i"><use href="#sline"/></svg><svg class="i"><use href="#sarc"/></svg><i class="dd"></i><svg class="i"><use href="#scircle"/></svg><i class="dd"></i><svg class="i"><use href="#sconic"/></svg><i class="dd"></i><svg class="i"><use href="#sbspl"/></svg><i class="dd"></i><i class="sp sp10"></i><svg class="i"><use href="#spoly"/></svg><svg class="i"><use href="#srect"/></svg><i class="dd"></i><svg class="i"><use href="#spolyg"/></svg><i class="dd"></i><svg class="i"><use href="#sslot"/></svg><i class="sp"></i><svg class="i"><use href="#sfillet"/></svg><i class="dd"></i><svg class="i"><use href="#strim"/></svg><svg class="i"><use href="#sext"/></svg><svg class="i"><use href="#ssplit"/></svg><svg class="i"><use href="#sextg"/></svg><svg class="i"><use href="#scarbon"/></svg><svg class="i"><use href="#scons"/></svg>
    </div>
    <div class="tb pl20 w1188">
      <svg class="i"><use href="#ccoin"/></svg><svg class="i"><use href="#cpoint"/></svg><svg class="i"><use href="#cvert"/></svg><svg class="i"><use href="#choriz"/></svg><svg class="i"><use href="#cpara"/></svg><svg class="i"><use href="#cperp"/></svg><svg class="i"><use href="#ctang"/></svg><svg class="i"><use href="#cequal"/></svg><svg class="i"><use href="#csym"/></svg><svg class="i"><use href="#cblock"/></svg><i class="sp"></i><svg class="i"><use href="#clock"/></svg><svg class="i"><use href="#chd"/></svg><svg class="i"><use href="#cvd"/></svg><svg class="i"><use href="#cdist"/></svg><svg class="i"><use href="#crad"/></svg><i class="dd"></i><svg class="i"><use href="#cang"/></svg><i class="sp"></i><svg class="i"><use href="#ctog"/></svg><svg class="i"><use href="#cdriv"/></svg>
    </div>
    <div class="tb pl19 noend">
      <svg class="i"><use href="#b1"/></svg><svg class="i"><use href="#b2"/></svg><svg class="i"><use href="#b3"/></svg><svg class="i"><use href="#b4"/></svg><svg class="i"><use href="#b5"/></svg><i class="dd dg"></i><span class="more">»</span>
    </div>
  </div>

  <div class="row r4">
    <div class="tb pl19 w505">
      <svg class="i"><use href="#sclose"/></svg><i class="dd"></i><svg class="i"><use href="#sclone"/></svg><svg class="i"><use href="#sdis1"/></svg><svg class="i"><use href="#sdis2"/></svg><svg class="i"><use href="#sadd"/></svg><i class="dd"></i><svg class="i"><use href="#sdis3"/></svg><svg class="i"><use href="#sdis4"/></svg>
    </div>
    <div class="tb pl18 w86">
      <svg class="i"><use href="#sswap"/></svg>
    </div>
    <div class="tb pl20 noend">
      <svg class="i"><use href="#sgrid"/></svg><i class="dd"></i><svg class="i"><use href="#ssnap"/></svg><i class="dd"></i><svg class="i"><use href="#slayer"/></svg><i class="dd"></i>
    </div>
  </div>

  <main class="work">
    <aside class="dock">
      <div class="dock-head"><span>Combo View</span><svg class="undock" viewBox="0 0 16 14"><rect x="5" y="1" width="10" height="8" fill="none" stroke="#222" stroke-width="1.500"/><rect x="1" y="5" width="10" height="8" fill="#d8d8d8" stroke="#222" stroke-width="1.500"/></svg></div>
      <div class="dock-tabs">
        <span class="dtab">Model</span>
        <span class="dtab on"><svg class="pencil" viewBox="0 0 30 22"><path d="M2 2L8 0L28 16L30 22L22 20Z" fill="#3d6fb0" stroke="#14305f"/><path d="M24 17L30 22L22 20Z" fill="#f4e0b0"/></svg>Tasks</span>
      </div>
      <div class="pane">
        <div class="tasks">
          <button class="closebtn">Close</button>

          <section class="box first">
            <div class="box-h only"><svg class="bdoc"><use href="#ldoc"/></svg><b>Solver messages</b><svg class="bchev"><use href="#chev"/></svg></div>
          </section>

          <section class="box">
            <div class="box-h"><svg class="bdoc"><use href="#ldoc"/></svg><b>Constraints</b><svg class="bchev"><use href="#chev"/></svg></div>
            <div class="box-b c-body">
              <div class="ctl">
                <svg class="cb"><use href="#chk"/></svg>
                <div class="fbtn f-c"><span>Filters</span><i class="fsep"></i><i class="farr"></i></div>
                <div class="sbtn"><svg class="eye"><use href="#eye"/></svg></div>
                <div class="tbtn"><svg class="tools"><use href="#tools"/></svg><i class="fsep"></i><i class="farr"></i></div>
              </div>
              <ul class="list c-list">
                <li><svg class="cb"><use href="#chk"/></svg><svg class="ci"><use href="#ccoin"/></svg><span>Constraint1</span></li>
                <li><svg class="cb"><use href="#chk"/></svg><svg class="ci"><use href="#ccoin"/></svg><span>Constraint2</span></li>
                <li><svg class="cb"><use href="#chk"/></svg><svg class="ci"><use href="#choriz"/></svg><span>Constraint3</span></li>
                <li><svg class="cb"><use href="#chk"/></svg><svg class="ci"><use href="#ccoin"/></svg><span>Constraint4</span></li>
                <li><svg class="cb"><use href="#chk"/></svg><svg class="ci"><use href="#ccoin"/></svg><span>Constraint5</span></li>
                <li><svg class="cb"><use href="#chk"/></svg><svg class="ci"><use href="#cvert"/></svg><span>Constraint6</span></li>
                <li><svg class="cb"><use href="#chk"/></svg><svg class="ci"><use href="#ccoin"/></svg><span>Constraint7</span></li>
              </ul>
            </div>
          </section>

          <section class="box elems">
            <div class="box-h"><svg class="bdoc"><use href="#ldoc"/></svg><b>Elements</b><svg class="bchev"><use href="#chev"/></svg></div>
            <div class="box-b e-body">
              <div class="ctl">
                <svg class="cb"><use href="#chk"/></svg>
                <div class="fbtn f-e"><span>Filters</span><i class="fsep"></i><i class="farr"></i></div>
                <div class="tbtn"><svg class="tools"><use href="#tools"/></svg><i class="fsep"></i><i class="farr"></i></div>
              </div>
              <ul class="list e-list">
                <li><svg class="cb"><use href="#chk"/></svg><svg class="ei"><use href="#ered"/></svg><svg class="ei"><use href="#egs"/></svg><svg class="ei"><use href="#egs2"/></svg><i class="edash"></i><span>1-Line</span></li>
                <li><svg class="cb"><use href="#chk"/></svg><svg class="ei"><use href="#ered"/></svg><svg class="ei"><use href="#egs"/></svg><svg class="ei"><use href="#egs2"/></svg><i class="edash"></i><span>2-Line</span></li>
                <li><svg class="cb"><use href="#chk"/></svg><svg class="ei"><use href="#ered"/></svg><svg class="ei"><use href="#egs"/></svg><svg class="ei"><use href="#egs2"/></svg><i class="edash"></i><span>3-Line</span></li>
                <li><svg class="cb"><use href="#chk"/></svg><svg class="ei"><use href="#ered"/></svg><svg class="ei"><use href="#egs"/></svg><svg class="ei"><use href="#egs2"/></svg><i class="edash"></i><span>4-Line</span></li>
                <li><svg class="cb"><use href="#chk"/></svg><svg class="ei"><use href="#ered"/></svg><svg class="ei"><use href="#egs"/></svg><svg class="ei"><use href="#egs2"/></svg><i class="edash"></i><span>5-Line</span></li>
              </ul>
            </div>
          </section>
        </div>
        <div class="scroll"><div class="thumb"></div></div>
      </div>
    </aside>

    <div class="center">
      <div class="view">
        <svg class="scene" viewBox="603 360 2469 1358">
          <rect x="905" y="710" width="1856" height="844" fill="#d5d5d5"/>
          <path d="M905 1554V710H2761V1554" fill="none" stroke="#15151f" stroke-width="3"/>
          <path d="M603 1554H3072" stroke="#c96060" stroke-width="2"/>
          <path d="M1834 360V1718" stroke="#80ff80" stroke-width="2"/>
          <path d="M1225 1405V712H2435L2440 1407L1833 1413Z" fill="none" stroke="#fff" stroke-width="3.500"/>
          <rect x="1825" y="746" width="10" height="2.500" fill="#e02020"/>
          <rect x="1256" y="1055" width="2" height="10" fill="#c02828"/>
          <g fill="#f01818"><ellipse cx="1225" cy="712" rx="3" ry="6"/><ellipse cx="2435" cy="712" rx="3" ry="6"/><ellipse cx="1225" cy="1405" rx="3" ry="6"/><ellipse cx="2440" cy="1407" rx="3" ry="6"/><ellipse cx="1833" cy="1413" rx="3" ry="6"/><ellipse cx="1833" cy="1554" rx="3" ry="6"/></g>
        </svg>
        <svg class="navcube" viewBox="2930 360 142 145">
          <g fill="#b5b9cf" stroke="#2a2a50" stroke-width=".6">
            <path d="M3000 367L3012 379H2988Z"/>
            <path d="M2982 373L2970 385L2963 384L2951 400L2952 388L2965 378Z"/>
            <path d="M3018 373L3030 385L3037 384L3049 400L3048 388L3035 378Z"/>
            <ellipse cx="3057" cy="375" rx="6.500" ry="6.500"/>
            <path d="M2970 400H3030L3040 417V448L3030 463H2970L2961 448V417Z"/>
            <path d="M2948 420L2935 432L2948 443Z"/>
            <path d="M3052 420L3065 432L3052 443Z"/>
            <path d="M2988 485H3012L3000 497Z"/>
            <path d="M3044 470L3052 474V486L3044 490L3035 486V474Z"/>
          </g>
          <path d="M2995 416H3006V448H2995ZM2990 401L2995 416M3010 401L3006 416M2990 463L2995 448M3010 463L3006 448M2961 417H2995M3040 417H3006M2961 448H2995M3040 448H3006" fill="none" stroke="#2a2a50" stroke-width=".7"/>
          <text x="2977" y="437" class="nc-t">RIGHT</text>
          <text x="3022" y="437" class="nc-t">REAR</text>
          <path d="M2963 467H3000" stroke="#e02030" stroke-width="2"/><path d="M3000 467H3037" stroke="#20d040" stroke-width="2"/>
        </svg>
        <svg class="axes" viewBox="0 0 100 64">
          <path d="M42 10V50" stroke="#1a3a8f" stroke-width="2.500"/>
          <path d="M42 5L47 20H37Z" fill="#1a3a8f"/>
          <path d="M42 50H18" stroke="#8a1a1a" stroke-width="2.500"/>
          <path d="M2 50L19 43V57Z" fill="#8a1a1a"/>
          <path d="M42 50H66" stroke="#1f8a2a" stroke-width="2.500"/>
          <path d="M82 50L65 43V57Z" fill="#1f8a2a"/>
          <text x="45" y="8" class="ax-t">Z</text><text x="1" y="46" class="ax-t">X</text><text x="83" y="47" class="ax-t">Y</text>
        </svg>
      </div>
      <div class="doc-tabs">
        <span class="doc st"><svg class="d-ic"><use href="#fc"/></svg>Start page<svg class="x"><use href="#xgr"/></svg></span>
        <span class="doc act"><svg class="d-ic"><use href="#fc"/></svg>Attempt : 1*<svg class="x or"><use href="#xor"/></svg></span>
      </div>
    </div>
  </main>

  <footer class="status">
    <span class="s-msg">Preselected: Attempt.Body.Pocket003.Sketch009.V_Axis (23.338913 mm,23.338913 mm,7.275097 mm)</span>
    <div class="s-r">
      <span class="s-g"><svg class="g-ic"><use href="#gest"/></svg>Gesture<i class="s-ar"></i></span>
      <span class="s-d">87.81 mm x 48.28 mm<i class="s-ar"></i></span>
    </div>
  </footer>

  <div class="taskbar">
    <div class="weather">
      <svg class="w-cloud"><use href="#wcloud"/></svg><span class="w-badge">1</span>
      <div class="w-t"><span>47°F</span><span class="dim">Cloudy</span></div>
    </div>
    <div class="tk"><svg class="tk-ic"><use href="#win"/></svg></div>
    <div class="search"><svg class="s-q" viewBox="0 0 30 34"><circle cx="13" cy="14" r="11" fill="none" stroke="#e8e4e4" stroke-width="2.600"/><path d="M21 23L28 32" stroke="#e8e4e4" stroke-width="2.600"/></svg><span>Search</span><svg class="s-g-ic"><use href="#gift"/></svg></div>
    <div class="tk ml4"><svg class="tk-ic"><use href="#copilot"/></svg><span class="pre">PRE</span></div>
    <div class="tk"><svg class="tk-ic"><use href="#tview"/></svg></div>
    <div class="tk"><svg class="tk-ic"><use href="#chrome"/></svg></div>
    <div class="tk"><svg class="tk-ic"><use href="#teams"/></svg><span class="bdg salmon">1</span></div>
    <div class="tk run"><svg class="tk-ic"><use href="#folder"/></svg></div>
    <div class="tk"><svg class="tk-ic"><use href="#edge"/></svg></div>
    <div class="tk"><svg class="tk-ic"><use href="#store"/></svg></div>
    <div class="tk"><svg class="tk-ic"><use href="#letter"/></svg><span class="bdg salmon">2</span></div>
    <div class="tk"><svg class="tk-ic"><use href="#mcafee"/></svg></div>
    <div class="tk run"><svg class="tk-ic"><use href="#chrome"/></svg><span class="bdg orange">D</span></div>
    <div class="tk run"><svg class="tk-ic"><use href="#fusion"/></svg><span class="fus">FUS</span></div>
    <div class="tk run"><svg class="tk-ic"><use href="#vscode"/></svg></div>
    <div class="tk run"><svg class="tk-ic"><use href="#term"/></svg></div>
    <div class="tk run"><svg class="tk-ic"><use href="#inks"/></svg></div>
    <div class="tk run"><svg class="tk-ic"><use href="#pyth"/></svg></div>
    <div class="tk active"><svg class="tk-ic"><use href="#fc"/></svg></div>
    <div class="tk run"><svg class="tk-ic"><use href="#chrome"/></svg><span class="bdg teal">E</span></div>
    <div class="tk run"><svg class="tk-ic"><use href="#silh"/></svg></div>
    <div class="tray">
      <svg class="tr caret"><use href="#caret"/></svg>
      <svg class="tr od"><use href="#odrive"/></svg>
      <svg class="tr wf"><use href="#wifi"/></svg>
      <svg class="tr vl"><use href="#vol"/></svg>
      <svg class="tr bt"><use href="#batt"/></svg>
      <div class="clock"><span>7:22 PM</span><span>2/8/2024</span></div>
      <svg class="belli"><use href="#bell"/></svg>
    </div>
  </div>
</div>
</body>
</html>
```

FILE: styles.css
```css
*{box-sizing:border-box}
html,body{margin:0;padding:0}
body{width:3072px;height:1920px;overflow:hidden;background:#f0f0f0;font-family:"Open Sans","Noto Sans",sans-serif;color:#000}
i{font-style:normal;display:block}
ul{list-style:none;margin:0;padding:0}
.defs{position:absolute;width:0;height:0}
.app{width:3072px;height:1920px;display:flex;flex-direction:column}

/* shared svg paint */
.tl{fill:#2ad4d8;stroke:#0b6e70;stroke-width:3;stroke-linejoin:round}
.nf{fill:none;stroke:#0b6e70;stroke-width:3;stroke-linejoin:round}
.rd{fill:#d80a0a;stroke:#2b0000;stroke-width:2}
.rd1{fill:#d80a0a;stroke:#600;stroke-width:1}
.gn1{fill:#7ac020;stroke:#3d6a10;stroke-width:1}
.gd{fill:#8a8a8a;stroke:#666;stroke-width:1.5}
.lo{fill:none;stroke:#2e3436;stroke-width:8}
.li{fill:none;stroke:#fff;stroke-width:4.5}
.glo{fill:none;stroke:#777;stroke-width:8}
.gli{fill:none;stroke:#e4e4e4;stroke-width:4.5}

/* title */
.titlebar{height:45px;display:flex;align-items:center;background:linear-gradient(90deg,#f3f1f6,#f4f0f3 50%,#f8f0ec);padding-left:3px}
.t-ic{width:30px;height:30px}
.t-text{margin-left:5px;font-size:22.5px}
.wctl{margin-left:auto;display:flex;padding-right:38px;gap:69px}
.wbtn{width:22px;height:22px}
.wbtn + .wbtn + .wbtn{margin-left:2px}

/* menu */
.menubar{height:43px;background:#fff;display:flex;align-items:center;gap:32px;padding:0 0 2px 16px;font-size:23px;border-bottom:1px solid #e8e8e8}

/* toolbars */
.row{display:flex;background:#f0f0f0;border-bottom:3px solid #c0c0c0}
.r1{height:67px;margin-bottom:2px}
.r2{height:66px;margin-bottom:2px;border-right:2px solid #c0c0c0}
.r3{height:66px;margin-bottom:1px}
.r4{height:67px;margin-bottom:1px;border-right:2px solid #c0c0c0}
.tb{display:flex;align-items:center;border-right:2px solid #cfcfcf;position:relative;flex:none}
.r1 .tb{padding-top:2px}
.tb::before{content:"";position:absolute;left:7px;top:8px;bottom:8px;width:4px;border-left:1px dotted #aaa;border-right:1px dotted #aaa}
.noend{border-right:0;flex:1}
.pl18{padding-left:18px}.pl19{padding-left:19px}.pl20{padding-left:20px}.pl22{padding-left:22px}
.w208{width:208px}.w270{width:270px}.w311{width:311px}.w1146{width:1146px}.w1271{width:1271px}.w1188{width:1188px}.w505{width:505px}.w86{width:86px}
.i{width:62px;height:48px;flex:none}
.dd{width:24px;height:48px;flex:none;position:relative}
.dd::after{content:"";position:absolute;left:5px;top:19px;border-left:7px solid transparent;border-right:7px solid transparent;border-top:10px solid #333}
.dw{width:26px}
.dis::after,.dg::after{border-top-color:#888}
.sp{width:12px;height:48px;flex:none;position:relative}
.sp::after{content:"";position:absolute;left:5px;top:0;bottom:0;width:2px;background:#d4d4d4}
.sp10{width:10px}
.more{margin-left:24px;font-size:26px;line-height:26px;color:#444}

.wbcombo{width:286px;height:42px;background:#fff;border:1px solid #d2d2d2;border-bottom-color:#bbb;border-radius:2px;display:flex;align-items:center;padding-left:8px;font-size:20.5px}
.wb-ic{width:32px;height:32px;margin-right:8px}
.wb-ar{width:14px;height:14px;margin-left:auto;margin-right:9px}

/* work */
.work{flex:1;display:flex;min-height:0}
.dock{width:603px;flex:none;background:#f0f0f0;display:flex;flex-direction:column;padding-top:2px}
.dock-head{width:592px;height:36px;background:#d8d8d8;border:3px solid #c0c0c0;border-left-width:2px;display:flex;align-items:center;padding:2px 8px 0 8px;font-size:22px;letter-spacing:.45px}
.undock{width:16px;height:14px;margin-left:auto}
.dock-tabs{height:54px;display:flex;align-items:flex-end;padding-left:5px;font-size:21px}
.dtab{height:44px;width:97px;display:flex;align-items:center;justify-content:center;border:1px solid #e6e6e6;border-bottom:0;background:#f0f0f0}
.dtab.on{height:48px;width:148px;background:#f7f7f7;justify-content:flex-start;padding-left:29px}
.pencil{width:30px;height:24px;margin-right:10px;margin-top:-6px}
.pane{margin-left:4px;width:582px;height:1306px;border:1px solid #9a9a9a;display:flex;background:#f0f0f0;padding:2px 0 0 1px}
.tasks{width:544px;height:1300px;flex:none;background:linear-gradient(180deg,#aeaec6 0,#33335f 30%,#33335f 100%);padding:36px 16px 0;display:flex;flex-direction:column}
.closebtn{display:block;width:147px;height:44px;margin:0 0 0 183px;background:#fff;border:1px solid #d0d0d0;border-radius:3px;font:inherit;font-size:21px;padding:0}
.box{margin-top:21px;width:512px}
.box.first{margin-top:37px}
.box.elems{margin-top:16px}
.box-h{height:48px;border-radius:10px 10px 0 0;background:linear-gradient(90deg,#fff 0,#f2f5fd 40%,#c8d6f8 100%);display:flex;align-items:center;border:2px solid #fff;border-bottom-width:2px;padding:0 6px 0 14px}
.box-h.only{height:49px}
.box-h b{font-size:22px;font-weight:700;color:#2360d6;margin-left:5px;font-family:"Noto Sans","Open Sans",sans-serif}
.bdoc{width:28px;height:32px}
.bchev{width:32px;height:32px;margin-left:auto}
.box-b{background:#d6def6;border:2px solid #fff;border-top:0;padding:28px 26px 0 26px}
.c-body{height:496px}
.e-body{height:493px}
.ctl{display:flex;align-items:center;height:42px}
.cb{width:26px;height:26px;flex:none}
.fbtn{height:41px;background:#fff;border:1px solid #cfd5ea;border-radius:4px;display:flex;align-items:center;margin-left:26px;font-size:21px;position:relative}
.fbtn span{flex:1;text-align:center}
.f-c{width:262px}
.f-e{width:320px}
.fsep{width:1.500px;height:32px;background:#999}
.farr{width:26px;height:12px;position:relative;margin-left:0}
.farr::after{content:"";position:absolute;left:6px;top:3px;border-left:7px solid transparent;border-right:7px solid transparent;border-top:6px solid #111}
.sbtn{width:42px;height:41px;margin-left:16px;background:#fff;border:1px solid #cfd5ea;border-radius:4px;display:flex;align-items:center;justify-content:center}
.eye{width:32px;height:24px}
.tbtn{width:66px;height:41px;margin-left:16px;background:#fff;border:1px solid #cfd5ea;border-radius:4px;display:flex;align-items:center;padding-left:7px;gap:0}
.tools{width:30px;height:30px;margin-right:2px}
.list{width:455px;background:#fff;border:1px solid #8a8a9a;outline:0;font-size:22px;box-shadow:inset 0 0 0 3px #e6ecfc}
.c-list{height:382px;margin-top:15px;padding:4px 0 0 9px}
.c-list li{height:40px;display:flex;align-items:center}
.ci{width:30px;height:30px;margin-left:13px;flex:none}
.c-list span{margin-left:13px}
.e-list{height:383px;margin-top:12px;padding:3px 0 0 3px}
.e-list li{height:36px;display:flex;align-items:center}
.ei{width:30px;height:30px;margin-left:6px;flex:none}
.cb + .ei{margin-left:11px}
.edash{width:14px;height:1.500px;background:#ddd;margin-left:14px}
.e-list span{margin-left:17px}
.scroll{flex:1;padding:33px 8px 0 8px}
.thumb{width:19px;height:1225px;background:#888}

.center{flex:1;display:flex;flex-direction:column;min-width:0}
.view{height:1358px;position:relative;background:linear-gradient(180deg,#333360 0,#a9aac0 100%);overflow:hidden;flex:none}
.scene{position:absolute;left:0;top:0;width:2469px;height:1358px}
.navcube{position:absolute;left:2327px;top:0;width:142px;height:145px}
.nc-t{font:11px "Liberation Sans",sans-serif;fill:#333;text-anchor:middle;stroke:none;letter-spacing:-.5px}
.axes{position:absolute;left:2360px;top:1240px;width:100px;height:64px}
.ax-t{font:9px "Liberation Sans",sans-serif;fill:#223}
.doc-tabs{display:flex;padding-left:4px;font-size:21px;align-items:flex-start;border-top:1px solid #a8a8a8}
.doc{display:flex;align-items:center;height:43px;border:1px solid #e4e4e4;border-top:0}
.doc.st{width:221px;padding-left:20px;margin-top:1px;background:#f0f0f0}
.doc.act{width:256px;height:47px;padding-left:30px;background:#f8f8f8}
.d-ic{width:33px;height:33px;margin-right:6px}
.x{width:27px;height:28px;margin-left:9px;flex:none}
.or{margin-left:9px}

/* status */
.status{height:59px;display:flex;align-items:center;background:#f0f0f0;padding-left:4px;font-size:21.25px;margin-top:0}
.s-msg{padding-top:4px}
.s-r{margin-left:auto;display:flex;height:50px;padding-top:0;align-self:flex-start;margin-top:5px;font-size:21px}
.s-g{width:181px;border-left:1px solid #ddd;display:flex;align-items:center;padding-left:28px;position:relative}
.g-ic{width:32px;height:46px;margin-right:3px}
.s-d{width:273px;border-left:1px solid #ddd;display:flex;align-items:center;padding-left:16px;position:relative}
.s-ar{position:absolute;right:14px;top:20px;border-left:6.500px solid transparent;border-right:6.500px solid transparent;border-top:8px solid #111}
.s-d .s-ar{right:8px}

/* taskbar */
.taskbar{height:95px;border-top:1px solid #3c3a40;display:flex;align-items:center;color:#fff;font-size:22px;background:linear-gradient(90deg,#211e24 0,#211e24 420px,#3e1a16 620px,#3e1b17 700px,#231f27 1000px,#231f27 1560px,#3a1e18 1680px,#39201a 1960px,#2a1c2a 2200px,#3a1a22 2400px,#3a1a30 2700px,#38182e 3072px)}
.weather{width:436px;height:95px;position:relative;display:flex;align-items:center}
.w-cloud{position:absolute;left:38px;top:28px;width:50px;height:30px}
.w-badge{position:absolute;left:60px;top:10px;width:32px;height:34px;border-radius:50%;background:#f89aa0;color:#111;font-size:21px;line-height:34px;text-align:center}
.w-t{margin-left:101px;display:flex;flex-direction:column;line-height:33px;font-size:22px}
.dim{color:#d8d6d8}
.tk{width:88px;height:95px;flex:none;position:relative;display:flex;align-items:center;justify-content:center}
.tk-ic{width:48px;height:48px;margin-top:-2px}
.ml4{margin-left:4px}
.run::after{content:"";position:absolute;left:40px;bottom:9px;width:9px;height:6px;border-radius:3px;background:#b4b4b4}
.search{width:440px;height:64px;margin-left:6px;border-radius:32px;background:linear-gradient(90deg,#5e3c3a,#5a3a38 70%,#554040);display:flex;align-items:center;padding-left:24px;color:#dcd8d8;font-size:24px;flex:none;border:1px solid #6a4e4c}
.s-q{width:30px;height:34px;margin-right:20px}
.s-g-ic{width:80px;height:48px;margin-left:auto;margin-right:18px}
.pre{position:absolute;left:26px;top:51px;width:34px;height:17px;font-size:13px;font-weight:700;color:#111;line-height:17px;text-align:center}
.fus{position:absolute;left:24px;top:53px;width:42px;height:16px;font-size:13px;color:#f4d8c0;line-height:16px;text-align:center}
.bdg{position:absolute;left:34px;top:12px;width:32px;height:34px;border-radius:50%;text-align:center;font-size:21px;line-height:34px;color:#111}
.salmon{background:#f0806a}
.orange{background:#e87008;color:#f4c088}
.teal{background:#0f8478;color:#bfe8e0}
.active{height:80px;width:78px;margin:0 5px;background:#4a2a30;border-radius:8px}
.active::after{content:"";position:absolute;left:24px;bottom:4px;width:32px;height:6px;border-radius:3px;background:#ff9ca0}
.tray{display:flex;align-items:center;margin-left:46px;flex:1}
.tr{flex:none}
.caret{width:24px;height:24px;margin-right:34px}
.od{width:36px;height:36px;margin-right:29px}
.wf{width:36px;height:36px;margin-right:13px}
.vl{width:34px;height:36px;margin-right:14px}
.bt{width:36px;height:36px}
.clock{margin-left:auto;display:flex;flex-direction:column;align-items:flex-end;line-height:32px;font-size:23px}
.belli{width:30px;height:48px;margin:0 41px 0 16px}
```
